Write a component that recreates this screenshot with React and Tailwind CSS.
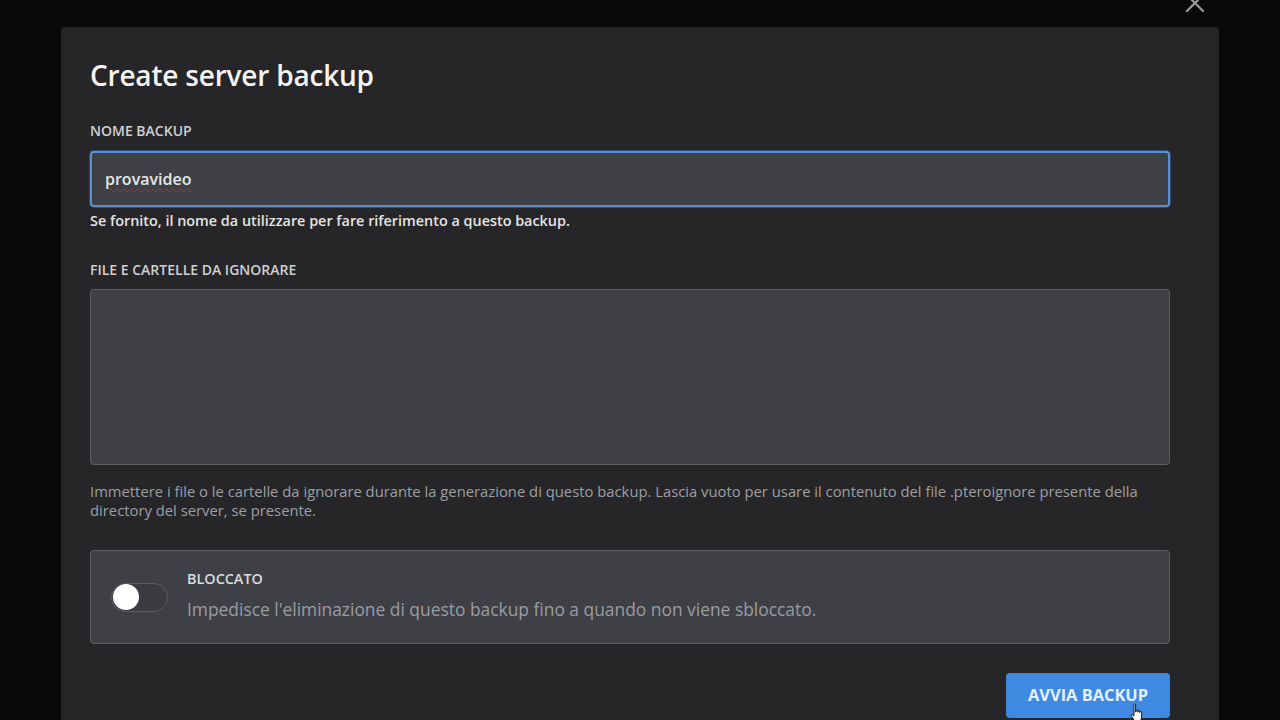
import React from "react";

export default function App() {
  return (
    <div className="w-[1280px] h-[720px] overflow-hidden bg-[#090909] relative" style={{ fontFamily: '"Open Sans", "Noto Sans", sans-serif' }}>
      <div className="absolute right-[74px] top-[-8px] text-[#9a9a9a]">
        <svg width="22" height="22" viewBox="0 0 22 22" fill="none" stroke="currentColor" strokeWidth="2.2" strokeLinecap="round">
          <path d="M3 3 L19 19 M19 3 L3 19" />
        </svg>
      </div>
      <div className="pt-[27px] px-[61px]">
        <div className="bg-[#262628] rounded-[4px] h-[720px] pl-[29px] pr-[49px] pt-[29px]">
          <h2 className="text-[28px] leading-[38px] font-semibold text-[#f4f4f4] tracking-[-0.2px]">Create server backup</h2>
          <div className="mt-[28px]">
            <label className="block text-[14px] leading-[17px] font-semibold text-[#cfd0d2] uppercase">Nome Backup</label>
            <div className="mt-[12px] h-[56px] rounded-[4px] bg-[#3e4046] border-2 border-[#5b8fd3] shadow-[0_0_0_1px_rgba(60,110,180,0.5)] flex items-center px-[13px]">
              <span className="text-[16px] font-semibold text-[#e6e6e6] underline decoration-[#a3353c] decoration-wavy decoration-1 underline-offset-[3px]">provavideo</span>
            </div>
            <p className="mt-[4px] text-[14.4px] leading-[19px] font-semibold text-[#e4e4e4]">Se fornito, il nome da utilizzare per fare riferimento a questo backup.</p>
          </div>
          <div className="mt-[31px]">
            <label className="block text-[14px] leading-[17px] font-semibold text-[#cfd0d2] uppercase">File e cartelle da ignorare</label>
            <div className="mt-[11px] h-[176px] rounded-[4px] bg-[#3e4046] border border-[#5d5f64]"></div>
            <p className="mt-[17px] max-w-[1072px] text-[14.8px] leading-[19px] text-[#9d9fa3]">
              Immettere i file o le cartelle da ignorare durante la generazione di questo backup. Lascia vuoto per usare il contenuto del file .pteroignore presente della directory del server, se presente.
            </p>
          </div>
          <div className="mt-[30px] h-[94px] rounded-[4px] bg-[#3e4046] border border-[#5d5f64] flex items-center pl-[20px]">
            <div className="w-[57px] h-[29px] rounded-full border border-[#5a5c61] bg-[#3a3c41] flex items-center px-[1px]">
              <div className="w-[26px] h-[26px] rounded-full bg-white"></div>
            </div>
            <div className="ml-[19px] mt-[-5px]">
              <div className="text-[14.4px] leading-[17px] font-semibold text-[#dcdcdc] uppercase">Bloccato</div>
              <div className="mt-[11px] text-[17.4px] leading-[22px] text-[#9a9ca0]">Impedisce l'eliminazione di questo backup fino a quando non viene sbloccato.</div>
            </div>
          </div>
          <div className="mt-[29px] flex justify-end">
            <button className="relative w-[164px] h-[45px] rounded-[4px] bg-[#3f8ae0] text-[16.4px] font-bold text-[#e3f1ff] uppercase">
              Avvia Backup
              <svg className="absolute left-[124px] top-[30px]" width="16" height="20" viewBox="0 0 16 20">
                <path d="M4 1.5 C4 0.7 5.6 0.7 5.6 1.5 V9 H6 V7.5 C6 6.7 7.6 6.7 7.6 7.5 V9 H8 V8 C8 7.2 9.6 7.2 9.6 8 V9.5 H10 V9 C10 8.2 11.6 8.2 11.6 9 V14 C11.6 16 10.5 18 9 18 H5.5 C4 18 3 15 1.5 13 C0.8 12 1.6 11 2.6 11.8 L4 13 Z" fill="white" stroke="#111" strokeWidth="0.9" />
              </svg>
            </button>
          </div>
        </div>
      </div>
    </div>
  );
}
